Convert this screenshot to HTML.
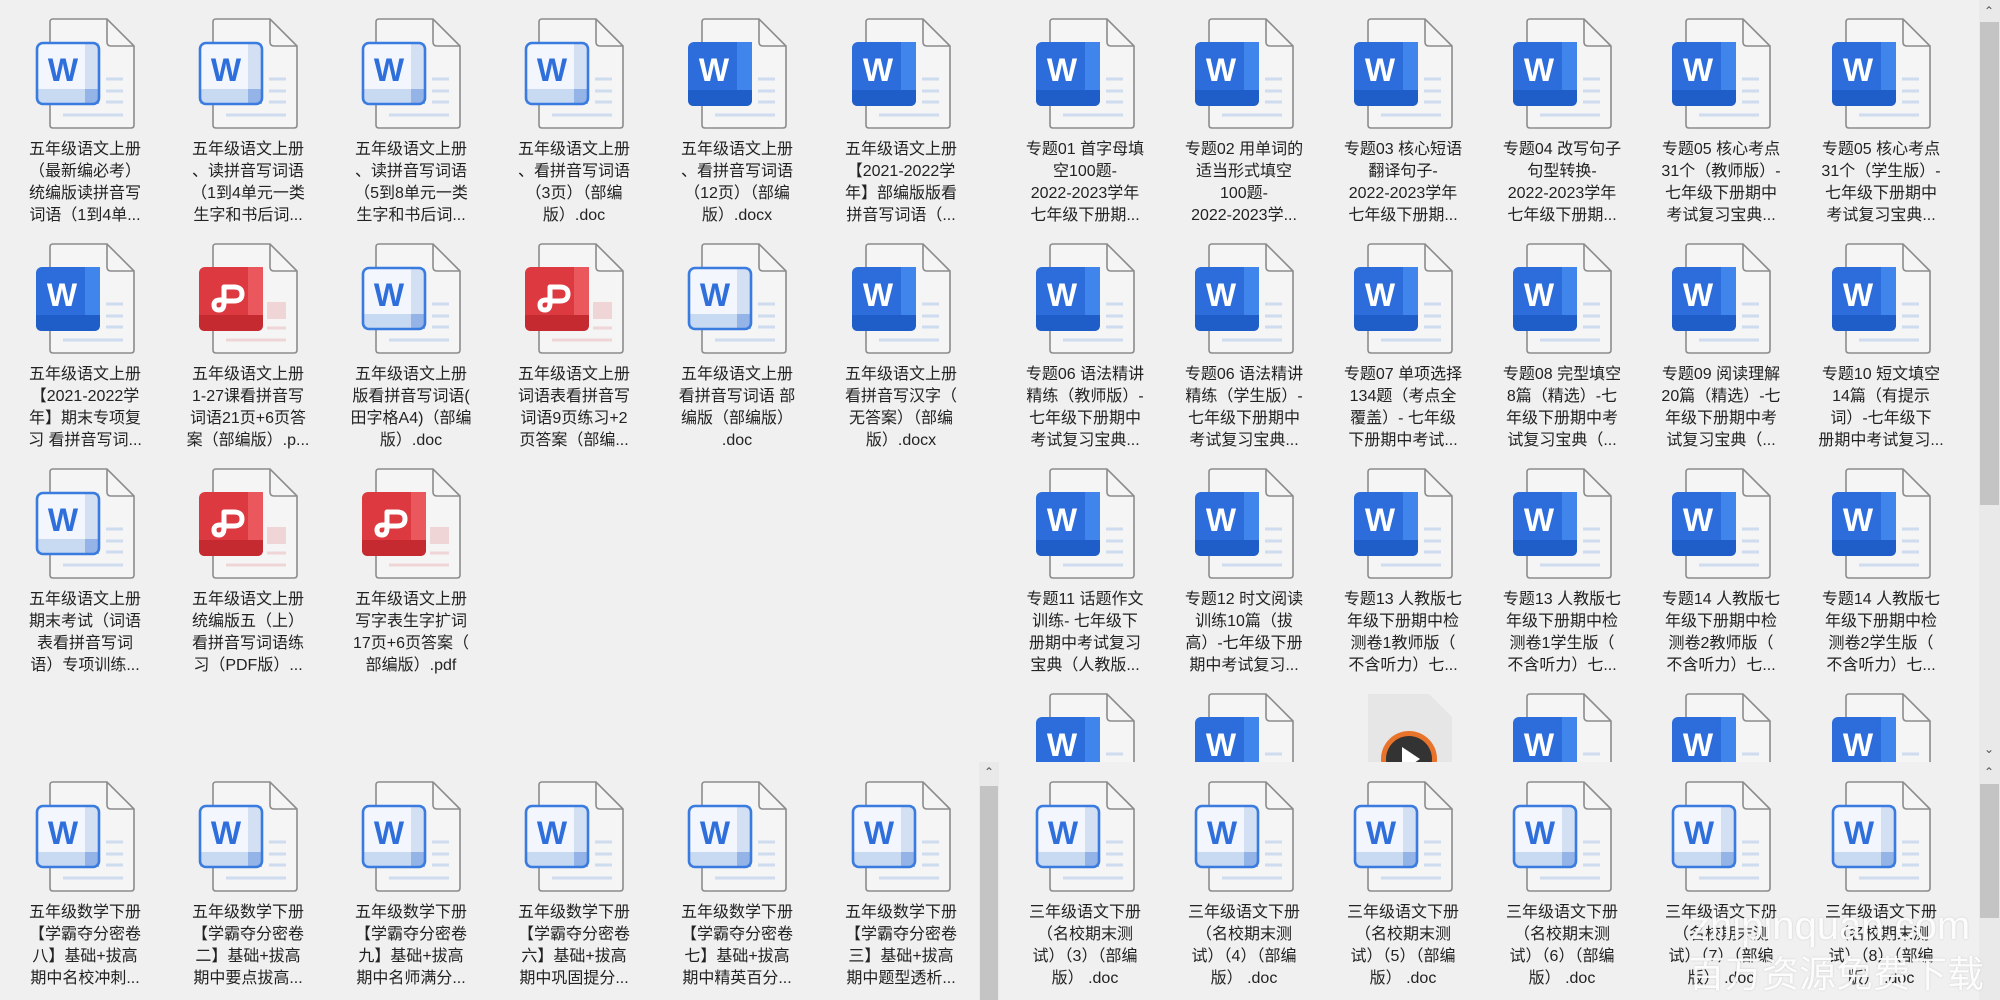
<!DOCTYPE html>
<html><head><meta charset="utf-8">
<style>
html,body{margin:0;padding:0}
body{width:2000px;height:1000px;background:#f0f0f0;position:relative;overflow:hidden;font-family:"Liberation Sans","Noto Sans CJK SC",sans-serif}
.i{position:absolute;width:100px;height:112px}
.t{position:absolute;width:170px;text-align:center;font-size:16px;line-height:22px;color:#222;white-space:nowrap}
.sb{position:absolute;background:#e9e9e9}
.th{position:absolute;background:#c4c4c4}
.ar{position:absolute;font-size:12px;color:#555;width:20px;text-align:center}
.wm{position:absolute;color:rgba(255,255,255,0.92);white-space:nowrap;text-shadow:0 0 2px rgba(0,0,0,0.15)}
</style></head><body>
<svg width="0" height="0" style="position:absolute">
<defs>
<symbol id="pg" viewBox="0 0 100 112">
<path d="M18 1 H72 L99 28 V107 Q99 110 96 110 H18 Q15 110 15 107 V4 Q15 1 18 1 Z" fill="#f5f5f5" stroke="#8c8c8c" stroke-width="1.6"/>
<path d="M72 1 V24 Q72 28 76 28 H99" fill="none" stroke="#8c8c8c" stroke-width="1.6"/>
<g stroke="#cfdcef" stroke-width="3"><line x1="71" y1="61" x2="88" y2="61"/><line x1="71" y1="73" x2="88" y2="73"/><line x1="71" y1="84" x2="88" y2="84"/><line x1="28" y1="97" x2="88" y2="97"/></g>
</symbol>
<symbol id="wo" viewBox="0 0 100 112">
<use href="#pg"/>
<rect x="2" y="25" width="62" height="61" rx="6" fill="#f3f6fc"/>
<rect x="50" y="25" width="14" height="61" fill="#d3e0f4"/>
<rect x="2" y="71" width="62" height="15" fill="#c8d9f2"/>
<rect x="50" y="71" width="14" height="15" fill="#94b3e6"/>
<rect x="2" y="25" width="62" height="61" rx="6" fill="none" stroke="#3a7be0" stroke-width="2.6"/>
<text x="28" y="63" text-anchor="middle" font-family="Liberation Sans" font-weight="bold" font-size="32" fill="#2f6fdb">W</text>
</symbol>
<symbol id="ws" viewBox="0 0 100 112">
<use href="#pg"/>
<rect x="1" y="24" width="64" height="64" rx="6" fill="#2c6ddb"/>
<rect x="50" y="24" width="15" height="50" fill="#3f85ec"/>
<path d="M1 72 H65 V82 Q65 88 59 88 H7 Q1 88 1 82 Z" fill="#1f5ec8"/>
<text x="27" y="63" text-anchor="middle" font-family="Liberation Sans" font-weight="bold" font-size="32" fill="#fff">W</text>
</symbol>
<symbol id="pdf" viewBox="0 0 100 112">
<path d="M18 1 H72 L99 28 V107 Q99 110 96 110 H18 Q15 110 15 107 V4 Q15 1 18 1 Z" fill="#f5f5f5" stroke="#8c8c8c" stroke-width="1.6"/>
<path d="M72 1 V24 Q72 28 76 28 H99" fill="none" stroke="#8c8c8c" stroke-width="1.6"/>
<rect x="69" y="59" width="19" height="17" fill="#f0d5d7"/>
<g stroke="#f0d5d7" stroke-width="3"><line x1="69" y1="85" x2="88" y2="85"/><line x1="28" y1="97" x2="88" y2="97"/></g>
<rect x="1" y="24" width="64" height="64" rx="6" fill="#dc3a40"/>
<rect x="50" y="24" width="15" height="50" fill="#ea585e"/>
<path d="M1 72 H65 V82 Q65 88 59 88 H7 Q1 88 1 82 Z" fill="#c52a31"/>
<path d="M26 60 V44 H36 Q44 44 44 51 Q44 58 36 58 H26 M26 60 Q26 67 21 67 Q16 67 16 62 Q16 57 22 57 H27" fill="none" stroke="#fff" stroke-width="5" stroke-linejoin="round"/>
</symbol>
<symbol id="vid" viewBox="0 0 100 112">
<path d="M15 1 H76 L99 24 V110 H15 Z" fill="#e6e6e6"/>
<circle cx="56" cy="66" r="28" fill="#e8742c"/>
<circle cx="56" cy="66" r="23" fill="#333"/>
<path d="M49 54 L67 66 L49 78 Z" fill="#fff"/>
</symbol>
</defs></svg>

<!-- TOP LEFT -->
<svg class="i" style="left:35px;top:18px"><use href="#wo"/></svg>
<div class="t" style="left:0px;top:139px">五年级语文上册<br>（最新编必考）<br>统编版读拼音写<br>词语（1到4单...</div>
<svg class="i" style="left:198px;top:18px"><use href="#wo"/></svg>
<div class="t" style="left:163px;top:139px">五年级语文上册<br>、读拼音写词语<br>（1到4单元一类<br>生字和书后词...</div>
<svg class="i" style="left:361px;top:18px"><use href="#wo"/></svg>
<div class="t" style="left:326px;top:139px">五年级语文上册<br>、读拼音写词语<br>（5到8单元一类<br>生字和书后词...</div>
<svg class="i" style="left:524px;top:18px"><use href="#wo"/></svg>
<div class="t" style="left:489px;top:139px">五年级语文上册<br>、看拼音写词语<br>（3页）（部编<br>版）.doc</div>
<svg class="i" style="left:687px;top:18px"><use href="#ws"/></svg>
<div class="t" style="left:652px;top:139px">五年级语文上册<br>、看拼音写词语<br>（12页）（部编<br>版）.docx</div>
<svg class="i" style="left:851px;top:18px"><use href="#ws"/></svg>
<div class="t" style="left:816px;top:139px">五年级语文上册<br>【2021-2022学<br>年】部编版版看<br>拼音写词语（...</div>

<svg class="i" style="left:35px;top:243px"><use href="#ws"/></svg>
<div class="t" style="left:0px;top:364px">五年级语文上册<br>【2021-2022学<br>年】期末专项复<br>习 看拼音写词...</div>
<svg class="i" style="left:198px;top:243px"><use href="#pdf"/></svg>
<div class="t" style="left:163px;top:364px">五年级语文上册<br>1-27课看拼音写<br>词语21页+6页答<br>案（部编版）.p...</div>
<svg class="i" style="left:361px;top:243px"><use href="#wo"/></svg>
<div class="t" style="left:326px;top:364px">五年级语文上册<br>版看拼音写词语(<br>田字格A4)（部编<br>版）.doc</div>
<svg class="i" style="left:524px;top:243px"><use href="#pdf"/></svg>
<div class="t" style="left:489px;top:364px">五年级语文上册<br>词语表看拼音写<br>词语9页练习+2<br>页答案（部编...</div>
<svg class="i" style="left:687px;top:243px"><use href="#wo"/></svg>
<div class="t" style="left:652px;top:364px">五年级语文上册<br>看拼音写词语 部<br>编版（部编版）<br>.doc</div>
<svg class="i" style="left:851px;top:243px"><use href="#ws"/></svg>
<div class="t" style="left:816px;top:364px">五年级语文上册<br>看拼音写汉字（<br>无答案）（部编<br>版）.docx</div>

<svg class="i" style="left:35px;top:468px"><use href="#wo"/></svg>
<div class="t" style="left:0px;top:589px">五年级语文上册<br>期末考试（词语<br>表看拼音写词<br>语）专项训练...</div>
<svg class="i" style="left:198px;top:468px"><use href="#pdf"/></svg>
<div class="t" style="left:163px;top:589px">五年级语文上册<br>统编版五（上）<br>看拼音写词语练<br>习（PDF版）...</div>
<svg class="i" style="left:361px;top:468px"><use href="#pdf"/></svg>
<div class="t" style="left:326px;top:589px">五年级语文上册<br>写字表生字扩词<br>17页+6页答案（<br>部编版）.pdf</div>

<!-- TOP RIGHT -->
<div style="position:absolute;left:999px;top:0;width:980px;height:762px;overflow:hidden">
<svg class="i" style="left:36px;top:18px"><use href="#ws"/></svg>
<div class="t" style="left:1px;top:139px">专题01 首字母填<br>空100题-<br>2022-2023学年<br>七年级下册期...</div>
<svg class="i" style="left:195px;top:18px"><use href="#ws"/></svg>
<div class="t" style="left:160px;top:139px">专题02 用单词的<br>适当形式填空<br>100题-<br>2022-2023学...</div>
<svg class="i" style="left:354px;top:18px"><use href="#ws"/></svg>
<div class="t" style="left:319px;top:139px">专题03 核心短语<br>翻译句子-<br>2022-2023学年<br>七年级下册期...</div>
<svg class="i" style="left:513px;top:18px"><use href="#ws"/></svg>
<div class="t" style="left:478px;top:139px">专题04 改写句子<br>句型转换-<br>2022-2023学年<br>七年级下册期...</div>
<svg class="i" style="left:672px;top:18px"><use href="#ws"/></svg>
<div class="t" style="left:637px;top:139px">专题05 核心考点<br>31个（教师版）-<br>七年级下册期中<br>考试复习宝典...</div>
<svg class="i" style="left:832px;top:18px"><use href="#ws"/></svg>
<div class="t" style="left:797px;top:139px">专题05 核心考点<br>31个（学生版）-<br>七年级下册期中<br>考试复习宝典...</div>

<svg class="i" style="left:36px;top:243px"><use href="#ws"/></svg>
<div class="t" style="left:1px;top:364px">专题06 语法精讲<br>精练（教师版）-<br>七年级下册期中<br>考试复习宝典...</div>
<svg class="i" style="left:195px;top:243px"><use href="#ws"/></svg>
<div class="t" style="left:160px;top:364px">专题06 语法精讲<br>精练（学生版）-<br>七年级下册期中<br>考试复习宝典...</div>
<svg class="i" style="left:354px;top:243px"><use href="#ws"/></svg>
<div class="t" style="left:319px;top:364px">专题07 单项选择<br>134题（考点全<br>覆盖）- 七年级<br>下册期中考试...</div>
<svg class="i" style="left:513px;top:243px"><use href="#ws"/></svg>
<div class="t" style="left:478px;top:364px">专题08 完型填空<br>8篇（精选）-七<br>年级下册期中考<br>试复习宝典（...</div>
<svg class="i" style="left:672px;top:243px"><use href="#ws"/></svg>
<div class="t" style="left:637px;top:364px">专题09 阅读理解<br>20篇（精选）-七<br>年级下册期中考<br>试复习宝典（...</div>
<svg class="i" style="left:832px;top:243px"><use href="#ws"/></svg>
<div class="t" style="left:797px;top:364px">专题10 短文填空<br>14篇（有提示<br>词）-七年级下<br>册期中考试复习...</div>

<svg class="i" style="left:36px;top:468px"><use href="#ws"/></svg>
<div class="t" style="left:1px;top:589px">专题11 话题作文<br>训练- 七年级下<br>册期中考试复习<br>宝典（人教版...</div>
<svg class="i" style="left:195px;top:468px"><use href="#ws"/></svg>
<div class="t" style="left:160px;top:589px">专题12 时文阅读<br>训练10篇（拔<br>高）-七年级下册<br>期中考试复习...</div>
<svg class="i" style="left:354px;top:468px"><use href="#ws"/></svg>
<div class="t" style="left:319px;top:589px">专题13 人教版七<br>年级下册期中检<br>测卷1教师版（<br>不含听力）七...</div>
<svg class="i" style="left:513px;top:468px"><use href="#ws"/></svg>
<div class="t" style="left:478px;top:589px">专题13 人教版七<br>年级下册期中检<br>测卷1学生版（<br>不含听力）七...</div>
<svg class="i" style="left:672px;top:468px"><use href="#ws"/></svg>
<div class="t" style="left:637px;top:589px">专题14 人教版七<br>年级下册期中检<br>测卷2教师版（<br>不含听力）七...</div>
<svg class="i" style="left:832px;top:468px"><use href="#ws"/></svg>
<div class="t" style="left:797px;top:589px">专题14 人教版七<br>年级下册期中检<br>测卷2学生版（<br>不含听力）七...</div>

<svg class="i" style="left:36px;top:693px"><use href="#ws"/></svg>
<svg class="i" style="left:195px;top:693px"><use href="#ws"/></svg>
<svg class="i" style="left:354px;top:693px"><use href="#vid"/></svg>
<svg class="i" style="left:513px;top:693px"><use href="#ws"/></svg>
<svg class="i" style="left:672px;top:693px"><use href="#ws"/></svg>
<svg class="i" style="left:832px;top:693px"><use href="#ws"/></svg>
</div>
<div class="sb" style="left:1979px;top:0;width:21px;height:762px"></div>
<div class="th" style="left:1980px;top:22px;width:19px;height:483px"></div>
<div class="ar" style="left:1979px;top:4px">&#8963;</div>
<div class="ar" style="left:1979px;top:742px">&#8964;</div>

<!-- BOTTOM LEFT -->
<svg class="i" style="left:35px;top:781px"><use href="#wo"/></svg>
<div class="t" style="left:0px;top:902px">五年级数学下册<br>【学霸夺分密卷<br>八】基础+拔高<br>期中名校冲刺...</div>
<svg class="i" style="left:198px;top:781px"><use href="#wo"/></svg>
<div class="t" style="left:163px;top:902px">五年级数学下册<br>【学霸夺分密卷<br>二】基础+拔高<br>期中要点拔高...</div>
<svg class="i" style="left:361px;top:781px"><use href="#wo"/></svg>
<div class="t" style="left:326px;top:902px">五年级数学下册<br>【学霸夺分密卷<br>九】基础+拔高<br>期中名师满分...</div>
<svg class="i" style="left:524px;top:781px"><use href="#wo"/></svg>
<div class="t" style="left:489px;top:902px">五年级数学下册<br>【学霸夺分密卷<br>六】基础+拔高<br>期中巩固提分...</div>
<svg class="i" style="left:687px;top:781px"><use href="#wo"/></svg>
<div class="t" style="left:652px;top:902px">五年级数学下册<br>【学霸夺分密卷<br>七】基础+拔高<br>期中精英百分...</div>
<svg class="i" style="left:851px;top:781px"><use href="#wo"/></svg>
<div class="t" style="left:816px;top:902px">五年级数学下册<br>【学霸夺分密卷<br>三】基础+拔高<br>期中题型透析...</div>
<div class="sb" style="left:979px;top:762px;width:20px;height:238px"></div>
<div class="th" style="left:980px;top:786px;width:18px;height:214px"></div>
<div class="ar" style="left:979px;top:765px">&#8963;</div>

<!-- BOTTOM RIGHT -->
<svg class="i" style="left:1035px;top:781px"><use href="#wo"/></svg>
<div class="t" style="left:1000px;top:902px">三年级语文下册<br>（名校期末测<br>试）（3）（部编<br>版） .doc</div>
<svg class="i" style="left:1194px;top:781px"><use href="#wo"/></svg>
<div class="t" style="left:1159px;top:902px">三年级语文下册<br>（名校期末测<br>试）（4）（部编<br>版） .doc</div>
<svg class="i" style="left:1353px;top:781px"><use href="#wo"/></svg>
<div class="t" style="left:1318px;top:902px">三年级语文下册<br>（名校期末测<br>试）（5）（部编<br>版） .doc</div>
<svg class="i" style="left:1512px;top:781px"><use href="#wo"/></svg>
<div class="t" style="left:1477px;top:902px">三年级语文下册<br>（名校期末测<br>试）（6）（部编<br>版） .doc</div>
<svg class="i" style="left:1671px;top:781px"><use href="#wo"/></svg>
<div class="t" style="left:1636px;top:902px">三年级语文下册<br>（名校期末测<br>试）（7）（部编<br>版） .doc</div>
<svg class="i" style="left:1831px;top:781px"><use href="#wo"/></svg>
<div class="t" style="left:1796px;top:902px">三年级语文下册<br>（名校期末测<br>试）（8）（部编<br>版） .doc</div>
<div class="sb" style="left:1979px;top:762px;width:21px;height:238px"></div>
<div class="th" style="left:1980px;top:784px;width:19px;height:134px"></div>
<div class="ar" style="left:1979px;top:765px">&#8963;</div>

<div class="wm" style="left:1690px;top:902px;font-size:40px;line-height:48px;font-family:'Liberation Sans',sans-serif">zhipinquan.com</div>
<div class="wm" style="left:1688px;top:952px;font-size:37px;line-height:46px;font-family:'Liberation Sans','Noto Sans CJK SC',sans-serif">百万资源免费下载</div>
</body></html>
